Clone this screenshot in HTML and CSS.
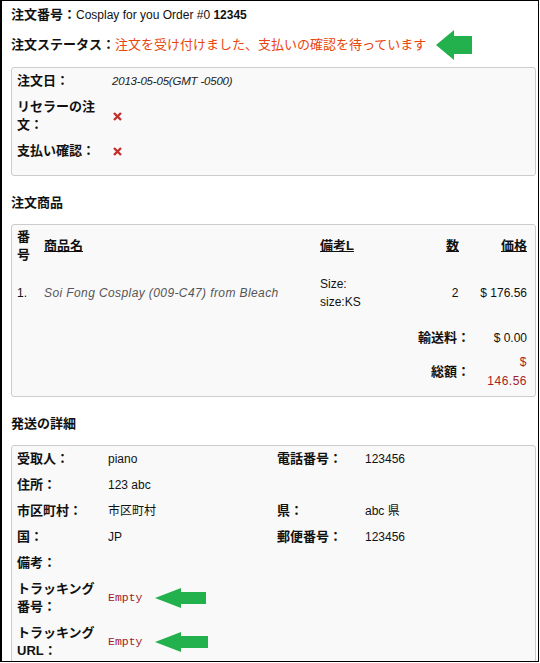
FILE: index.html
```html
<!DOCTYPE html>
<html>
	<head>
		<meta charset="utf-8">
		<title>注文の詳細</title>
		<link rel="stylesheet" href="styles.css">
	</head>
	<body>
	<div class="frame">
		<p class="order-no"><b class="jp">注文番号：</b>Cosplay for you Order #0 <b>12345</b></p>
		<p class="status"><b class="jp">注文ステータス：</b><span class="jp red">注文を受け付けました、支払いの確認を待っています</span>
			<svg class="arrow-big" width="36" height="30" viewBox="0 0 36 30"><polygon points="0,15 18,0 18,6 36,6 36,24 18,24 18,30" fill="#22b14c"/></svg>
		</p>

		<div class="box">
			<table class="info">
				<tr>
					<td class="label">注文日：</td>
					<td class="date">2013-05-05(GMT -0500)</td>
				</tr>
				<tr>
					<td class="label">リセラーの注文：</td>
					<td><svg class="cross" width="9" height="9" viewBox="0 0 9 9"><path d="M1 1L8 8M8 1L1 8" stroke="#c0302c" stroke-width="2.4"/></svg></td>
				</tr>
				<tr>
					<td class="label">支払い確認：</td>
					<td><svg class="cross" width="9" height="9" viewBox="0 0 9 9"><path d="M1 1L8 8M8 1L1 8" stroke="#c0302c" stroke-width="2.4"/></svg></td>
				</tr>
			</table>
		</div>

		<h3>注文商品</h3>
		<div class="box">
			<table class="items">
				<colgroup>
					<col class="c-no"><col class="c-name"><col class="c-note"><col class="c-qty"><col class="c-price">
				</colgroup>
				<tr class="head">
					<td class="jp">番号</td>
					<td class="jp"><u>商品名</u></td>
					<td class="jp"><u>備考L</u></td>
					<td class="jp center"><u>数</u></td>
					<td class="jp right"><u>価格</u></td>
				</tr>
				<tr class="item">
					<td>1.</td>
					<td class="name">Soi Fong Cosplay (009-C47) from Bleach</td>
					<td>Size:<br>size:KS</td>
					<td class="center">2</td>
					<td class="right">$ 176.56</td>
				</tr>
				<tr class="sum">
					<td colspan="4" class="jp right">輸送料：</td>
					<td class="right">$ 0.00</td>
				</tr>
				<tr class="sum">
					<td colspan="4" class="jp right">総額：</td>
					<td class="right total">$<br>146.56</td>
				</tr>
			</table>
		</div>

		<h3>発送の詳細</h3>
		<div class="box">
			<table class="ship">
				<colgroup>
					<col class="c-l1"><col class="c-v1"><col class="c-l2"><col>
				</colgroup>
				<tr>
					<td class="label">受取人：</td><td>piano</td>
					<td class="label">電話番号：</td><td>123456</td>
				</tr>
				<tr>
					<td class="label">住所：</td><td>123 abc</td>
					<td></td><td></td>
				</tr>
				<tr>
					<td class="label">市区町村：</td><td>市区町村</td>
					<td class="label">県：</td><td>abc 県</td>
				</tr>
				<tr>
					<td class="label">国：</td><td>JP</td>
					<td class="label">郵便番号：</td><td>123456</td>
				</tr>
				<tr>
					<td class="label">備考：</td><td></td>
					<td></td><td></td>
				</tr>
				<tr>
					<td class="label">トラッキング番号：</td>
					<td colspan="3"><span class="empty">Empty</span>
						<svg class="arrow" width="51" height="20" viewBox="0 0 51 20"><polygon points="0,10 26,0 26,4 51,4 51,16 26,16 26,20" fill="#22b14c"/></svg>
					</td>
				</tr>
				<tr>
					<td class="label">トラッキングURL：</td>
					<td colspan="3"><span class="empty">Empty</span>
						<svg class="arrow" width="53" height="20" viewBox="0 0 53 20"><polygon points="0,10 26,0 26,4 53,4 53,16 26,16 26,20" fill="#22b14c"/></svg>
					</td>
				</tr>
			</table>
		</div>
	</div>
	</body>
</html>
```

FILE: styles.css
```css
body {
	margin: 0;
	font-family: "Liberation Sans", "Noto Sans CJK JP", sans-serif;
	font-size: 12px;
	color: #111;
	background: #fff;
}
.frame {
	width: 539px;
	height: 662px;
	box-sizing: border-box;
	border: 1px solid #000;
	border-left-width: 2px;
	padding: 5px 2px 0 9px;
	overflow: hidden;
}
.jp {
	font-size: 13px;
}
p {
	margin: 0;
	line-height: 18px;
}
.status {
	display: flex;
	align-items: center;
	height: 30px;
	margin: 6px 0 7px;
}
.red {
	color: #e8450e;
}
.arrow-big {
	margin-left: 10px;
}
h3 {
	margin: 18px 0 12px;
	font-size: 13px;
	line-height: 18px;
}
.box {
	background: #f9f9f9;
	border: 1px solid #ccc;
	border-radius: 3px;
	padding: 0 5px 11px;
}
table {
	border-collapse: collapse;
	line-height: 18px;
}
td {
	padding: 4px 0;
}
td.label {
	font-size: 13px;
	font-weight: bold;
	padding-right: 7px;
}
.info td.label {
	width: 88px;
}
.date {
	font-size: 11.5px;
	font-style: italic;
	letter-spacing: -0.2px;
	color: #222;
}
.cross {
	display: block;
	margin-left: 1px;
}

/* items */
.items {
	table-layout: fixed;
	width: 510px;
}
.c-no { width: 27px; }
.c-name { width: 276px; }
.c-note { width: 120px; }
.c-qty { width: 30px; }
.c-price { width: 57px; }
.items .head td {
	font-weight: bold;
	padding: 3px 5px 6px 0;
}
.items .item td {
	padding: 5px 0 15px;
}
.items .sum td {
	padding: 3px 0;
	font-weight: bold;
}
.items .sum td.right:last-child {
	font-weight: normal;
}
.center {
	text-align: center;
}
.right {
	text-align: right;
}
.items .head td.right {
	padding-right: 0;
}
.name {
	font-style: italic;
	letter-spacing: 0.4px;
	color: #555;
}
.items .sum td.total {
	color: #a51d24;
	line-height: 19px;
	letter-spacing: 0.5px;
}
.box:has(.items) {
	padding-bottom: 2px;
}

/* shipping */
.ship {
	width: 512px;
	table-layout: fixed;
}
.c-l1 { width: 91px; }
.c-v1 { width: 169px; }
.c-l2 { width: 88px; }
.empty {
	font-family: "Liberation Mono", monospace;
	font-size: 11.5px;
	color: #a3202c;
	vertical-align: middle;
}
.arrow {
	vertical-align: middle;
	margin-left: 9px;
}
```
